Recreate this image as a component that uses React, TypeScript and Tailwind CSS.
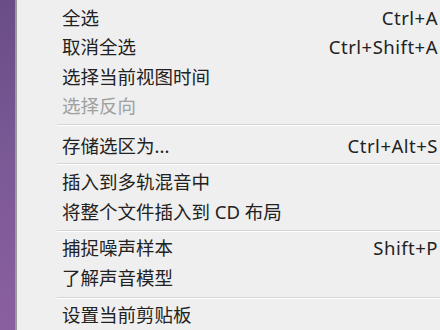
import React from "react";

type Item =
  | { kind: "item"; label: string; shortcut?: string; disabled?: boolean }
  | { kind: "sep"; h: string; top: string };

const items: Item[] = [
  { kind: "item", label: "全选", shortcut: "Ctrl+A" },
  { kind: "item", label: "取消全选", shortcut: "Ctrl+Shift+A" },
  { kind: "item", label: "选择当前视图时间" },
  { kind: "item", label: "选择反向", disabled: true },
  { kind: "sep", h: "h-[10px]", top: "pt-[3px]" },
  { kind: "item", label: "存储选区为...", shortcut: "Ctrl+Alt+S" },
  { kind: "sep", h: "h-[7px]", top: "pt-[2px]" },
  { kind: "item", label: "插入到多轨混音中" },
  { kind: "item", label: "将整个文件插入到 CD 布局" },
  { kind: "sep", h: "h-[7px]", top: "pt-[3px]" },
  { kind: "item", label: "捕捉噪声样本", shortcut: "Shift+P" },
  { kind: "item", label: "了解声音模型" },
  { kind: "sep", h: "h-[8px]", top: "pt-[4px]" },
  { kind: "item", label: "设置当前剪贴板" },
];

export default function App() {
  return (
    <div className="flex h-[330px] w-[440px] overflow-hidden bg-[#efefef]">
      {/* desktop behind the menu */}
      <div className="w-[15px] shrink-0 bg-gradient-to-b from-[#6a4c86] via-[#7b5a96] to-[#8a5fa0]" />
      <div className="w-[2px] shrink-0 bg-[#9a9a9a]" />
      <div
        className="flex-1 pt-[3px] text-[18.5px] text-[#222]"
        style={{ fontFamily: '"Noto Sans", "Noto Sans CJK SC", sans-serif' }}
      >
        {items.map((it, i) =>
          it.kind === "sep" ? (
            <div key={i} className={`${it.h} ${it.top} pl-[40px]`}>
              <div className="h-px bg-[#d4d4d4]" />
              <div className="h-px bg-white" />
            </div>
          ) : (
            <div
              key={i}
              className={`flex h-[29.5px] items-center justify-between pl-[45px] pr-[2px] leading-none whitespace-nowrap ${
                it.disabled ? "text-[#a0a0a0]" : ""
              }`}
            >
              <span>{it.label}</span>
              {it.shortcut && <span className="tracking-[0.5px]">{it.shortcut}</span>}
            </div>
          )
        )}
      </div>
    </div>
  );
}
